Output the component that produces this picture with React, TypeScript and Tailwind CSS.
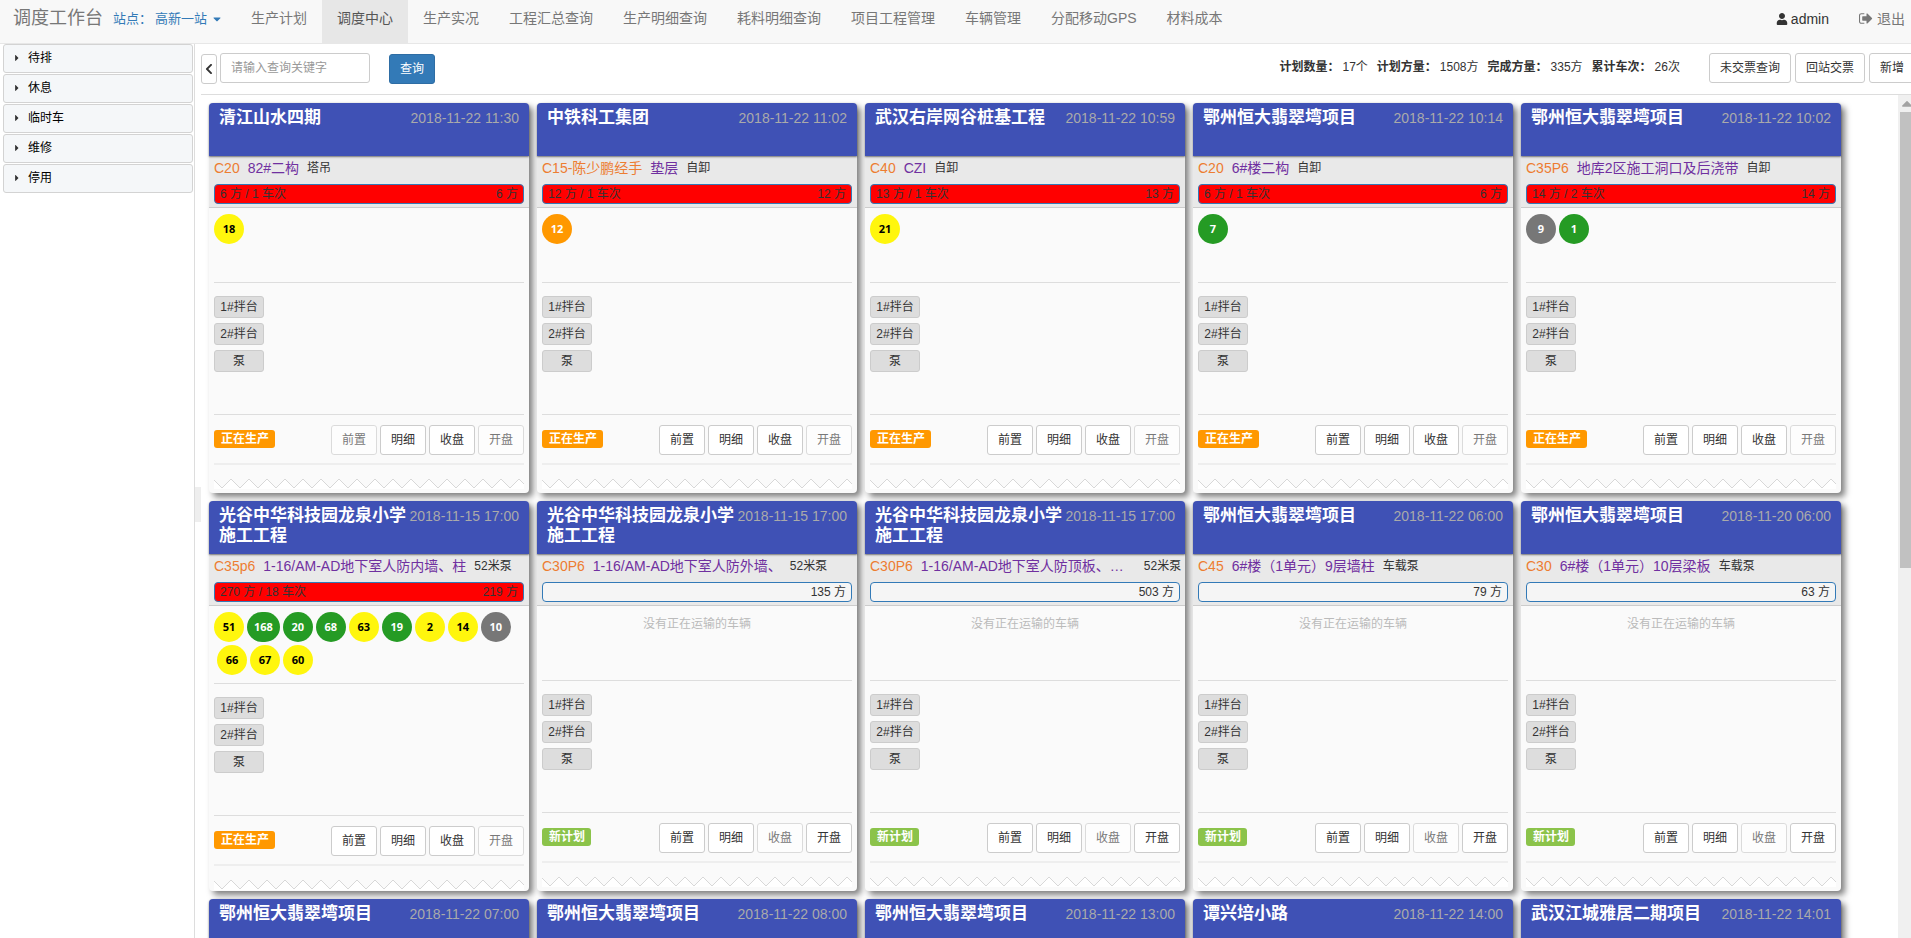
import React from "react";
import { FaUser, FaChevronLeft, FaCaretDown, FaCaretRight, FaCaretUp } from "react-icons/fa";

type Tone = "yellow" | "orange" | "green" | "gray";
type Truck = { no: number; tone: Tone };
type Plan = {
  title: string;
  time: string;
  grade: string;
  part: string;
  method: string;
  done?: string;
  total: string;
  trucks: Truck[];
  producing: boolean;
  disabled: string[];
};

const y = (no: number): Truck => ({ no, tone: "yellow" });
const g = (no: number): Truck => ({ no, tone: "green" });

const site = "鄂州恒大翡翠塆项目";
const school = "光谷中华科技园龙泉小学施工工程";

const plans: Plan[] = [
  { title: "清江山水四期", time: "2018-11-22 11:30", grade: "C20", part: "82#二构", method: "塔吊", done: "6 方 / 1 车次", total: "6 方", trucks: [y(18)], producing: true, disabled: ["前置", "开盘"] },
  { title: "中铁科工集团", time: "2018-11-22 11:02", grade: "C15-陈少鹏经手", part: "垫层", method: "自卸", done: "12 方 / 1 车次", total: "12 方", trucks: [{ no: 12, tone: "orange" }], producing: true, disabled: ["开盘"] },
  { title: "武汉右岸网谷桩基工程", time: "2018-11-22 10:59", grade: "C40", part: "CZI", method: "自卸", done: "13 方 / 1 车次", total: "13 方", trucks: [y(21)], producing: true, disabled: ["开盘"] },
  { title: site, time: "2018-11-22 10:14", grade: "C20", part: "6#楼二构", method: "自卸", done: "6 方 / 1 车次", total: "6 方", trucks: [g(7)], producing: true, disabled: ["开盘"] },
  { title: site, time: "2018-11-22 10:02", grade: "C35P6", part: "地库2区施工洞口及后浇带", method: "自卸", done: "14 方 / 2 车次", total: "14 方", trucks: [{ no: 9, tone: "gray" }, g(1)], producing: true, disabled: ["开盘"] },
  { title: school, time: "2018-11-15 17:00", grade: "C35p6", part: "1-16/AM-AD地下室人防内墙、柱", method: "52米泵", done: "270 方 / 18 车次", total: "219 方", trucks: [y(51), g(168), g(20), g(68), y(63), g(19), y(2), y(14), { no: 10, tone: "gray" }, y(66), y(67), y(60)], producing: true, disabled: ["开盘"] },
  { title: school, time: "2018-11-15 17:00", grade: "C30P6", part: "1-16/AM-AD地下室人防外墙、", method: "52米泵", total: "135 方", trucks: [], producing: false, disabled: ["收盘"] },
  { title: school, time: "2018-11-15 17:00", grade: "C30P6", part: "1-16/AM-AD地下室人防顶板、…", method: "52米泵", total: "503 方", trucks: [], producing: false, disabled: ["收盘"] },
  { title: site, time: "2018-11-22 06:00", grade: "C45", part: "6#楼（1单元）9层墙柱", method: "车载泵", total: "79 方", trucks: [], producing: false, disabled: ["收盘"] },
  { title: site, time: "2018-11-20 06:00", grade: "C30", part: "6#楼（1单元）10层梁板", method: "车载泵", total: "63 方", trucks: [], producing: false, disabled: ["收盘"] },
  { title: site, time: "2018-11-22 07:00", grade: "", part: "", method: "", total: "", trucks: [], producing: false, disabled: ["收盘"] },
  { title: site, time: "2018-11-22 08:00", grade: "", part: "", method: "", total: "", trucks: [], producing: false, disabled: ["收盘"] },
  { title: site, time: "2018-11-22 13:00", grade: "", part: "", method: "", total: "", trucks: [], producing: false, disabled: ["收盘"] },
  { title: "谭兴培小路", time: "2018-11-22 14:00", grade: "", part: "", method: "", total: "", trucks: [], producing: false, disabled: ["收盘"] },
  { title: "武汉江城雅居二期项目", time: "2018-11-22 14:01", grade: "", part: "", method: "", total: "", trucks: [], producing: false, disabled: ["收盘"] },
];

const toneClass: Record<Tone, string> = {
  yellow: "bg-[#fff60d] text-black",
  orange: "bg-[#ff9800] text-white",
  green: "bg-[#259b24] text-white",
  gray: "bg-[#777777] text-white",
};

const navItems = ["生产计划", "调度中心", "生产实况", "工程汇总查询", "生产明细查询", "耗料明细查询", "项目工程管理", "车辆管理", "分配移动GPS", "材料成本"];

const stats = [
  ["计划数量：", "17个"],
  ["计划方量：", "1508方"],
  ["完成方量：", "335方"],
  ["累计车次：", "26次"],
];

function SignOutIcon() {
  return (
    <svg viewBox="0 0 1792 1792" className="size-[15px]" fill="currentColor" aria-hidden="true">
      <path d="M640 1440q0 4 1 20t.5 26.5-3 23.5-10 19.5-20.5 6.5h-320q-119 0-203.5-84.5t-84.5-203.5v-704q0-119 84.5-203.5t203.5-84.5h320q13 0 22.500 9.500t9.500 22.500q0 4 1 20t.5 26.500-3 23.500-10 19.500-20.500 6.500h-320q-66 0-113 47t-47 113v704q0 66 47 113t113 47h312l11.500 1 11.500 3 8 5.500 7 9 2 13.500zM1568 896q0 26-19 45l-544 544q-19 19-45 19t-45-19-19-45v-288h-448q-26 0-45-19t-19-45v-384q0-26 19-45t45-19h448v-288q0-26 19-45t45-19 45 19l544 544q19 19 19 45z" />
    </svg>
  );
}

// Torn-edge strip: 9px teeth repeated every 18px across the card.
const teeth = "-1,0 " + Array.from({ length: 19 }, (_, i) => `${i * 18 + 8},9 ${i * 18 + 17},0`).join(" ");

function Zigzag() {
  return (
    <svg className="mt-[14px] block h-[10px] w-full" aria-hidden="true">
      <polygon points={`${teeth} 341,10 -1,10`} fill="#fff" />
      <polyline points={teeth} fill="none" stroke="#d8d8d8" />
    </svg>
  );
}

function OutlineButton({ children, disabled }: { children: React.ReactNode; disabled?: boolean }) {
  return (
    <button
      type="button"
      disabled={disabled}
      className="h-[30px] shrink-0 rounded-[3px] border border-[#ccc] bg-white px-[10px] text-xs whitespace-nowrap text-[#333] disabled:opacity-65"
    >
      {children}
    </button>
  );
}

function PlanCard({ plan }: { plan: Plan }) {
  return (
    <article className="h-[390px] w-80 rounded-[4px] bg-[#fafafa] shadow-[4px_4px_6px_rgba(0,0,0,0.5)]">
      <header className="relative flex h-[53px] rounded-t-[4px] bg-[#3f51b5] px-[10px] pt-1 shadow-[0_1px_2px_rgba(0,0,0,0.5)]">
        <h2 className="min-w-0 flex-1 pt-px text-[17px] leading-5 font-bold text-white">{plan.title}</h2>
        <time className="shrink-0 text-sm leading-[22px] text-[#aaa]">{plan.time}</time>
      </header>
      <div className="border-b border-[#ccc] bg-[#e9e9e9] px-[5px] pb-[3px]">
        <div className="flex h-6 items-center gap-2 whitespace-nowrap">
          <span className="shrink-0 text-sm text-[#ed7d31]">{plan.grade}</span>
          <span className={`shrink-0 text-sm text-[#7030a0] ${plan.part.endsWith("…") ? "w-[215px]" : ""}`}>{plan.part}</span>
          <span className="shrink-0 text-xs text-[#333]">{plan.method}</span>
        </div>
        <div className={`mt-1 flex h-5 items-center justify-between rounded-[4px] border border-[#337ab7] px-[5px] text-xs text-[#333] ${plan.done ? "bg-[#ff0000]" : "bg-[#f5f5f5]"}`}>
          <span>{plan.done}</span>
          <span>{plan.total}</span>
        </div>
      </div>
      <div className="px-[5px] pt-[6px]">
        <div className="flex min-h-[68px] flex-wrap content-start pb-[5px]">
          {plan.trucks.map((t) => (
            <span
              key={t.no}
              className={`mb-[3px] ml-[3px] flex h-[30px] min-w-[30px] items-center justify-center rounded-full px-[7px] font-['Open_Sans','Noto_Sans',sans-serif] text-[11px] font-bold first:ml-0 ${toneClass[t.tone]}`}
            >
              {t.no}
            </span>
          ))}
          {plan.trucks.length === 0 && <p className="w-full text-center text-xs leading-6 text-[#bbb]">没有正在运输的车辆</p>}
        </div>
        <div className="flex h-[132px] flex-col items-start gap-[5px] border-t border-[#ddd] pt-[13px]">
          {["1#拌台", "2#拌台", "泵"].map((s) => (
            <button key={s} type="button" className="h-[22px] w-[50px] rounded-[3px] border border-[#ccc] bg-[#ddd] text-xs leading-5 text-[#333]">
              {s}
            </button>
          ))}
        </div>
        <div className="flex h-[49px] items-center border-t border-[#ddd] pt-[2px]">
          <span className={`mb-[2px] rounded-[3px] pr-[6px] pl-[7px] text-xs leading-[18px] font-bold text-white ${plan.producing ? "bg-[#ff9800]" : "bg-[#8bc34a]"}`}>
            {plan.producing ? "正在生产" : "新计划"}
          </span>
          <div className="ml-auto flex gap-[3px]">
            {["前置", "明细", "收盘", "开盘"].map((b) => (
              <OutlineButton key={b} disabled={plan.disabled.includes(b)}>
                {b}
              </OutlineButton>
            ))}
          </div>
        </div>
        <div className="h-[2px] bg-[#eee]" />
        <Zigzag />
      </div>
    </article>
  );
}

export default function App() {
  return (
    <div className="flex h-screen flex-col overflow-hidden bg-white font-['Liberation_Sans','Noto_Sans_CJK_SC',sans-serif] text-[#333]">
      <nav className="flex h-11 shrink-0 items-stretch border-b border-[#e7e7e7] bg-[#f8f8f8] text-sm text-[#777]">
        <a href="#home" className="pl-[13px] text-lg leading-9">调度工作台</a>
        <a href="#station" className="flex w-[133px] items-center pb-[5px] pl-[10px] text-[13px] whitespace-nowrap text-[#337ab7]">
          站点：<span className="ml-[3px]">高新一站</span>
          <FaCaretDown className="ml-1 size-3" />
        </a>
        {navItems.map((n) => (
          <a
            key={n}
            href={`#${n}`}
            className={`px-[15px] leading-9 whitespace-nowrap ${n === "调度中心" ? "bg-[#e7e7e7] text-[#555]" : ""}`}
          >
            {n}
          </a>
        ))}
        <a href="#user" className="ml-auto flex items-center gap-[3px] pb-[6px] text-[#333]">
          <FaUser className="size-3" />
          admin
        </a>
        <a href="#logout" className="ml-[30px] flex items-center gap-[3px] pr-[6px] pb-[6px]">
          <SignOutIcon />
          退出
        </a>
      </nav>
      <div className="flex min-h-0 flex-1">
        <aside className="flex w-[195px] shrink-0 flex-col gap-px border-r border-[#ddd] pr-px pl-[3px]">
          {["待排", "休息", "临时车", "维修", "停用"].map((s) => (
            <button key={s} type="button" className="flex h-[29px] items-center rounded-[3px] border border-[#d3d3d3] bg-[#f5f7f9] pb-[2px] pl-2 text-xs text-black">
              <FaCaretRight className="mr-[6px] size-[10px] text-[#333]" />
              {s}
            </button>
          ))}
        </aside>
        <div className="flex w-[6px] shrink-0 items-center pt-[27px]">
          <div className="h-[35px] w-full bg-[#eee]" />
        </div>
        <main className="-mr-1 flex min-w-0 flex-1 flex-col">
          <div className="flex h-[51px] shrink-0 items-start border-b border-[#ddd] pt-[9px] text-xs">
            <button type="button" aria-label="收起" className="mt-px flex h-[30px] w-4 items-center justify-center rounded-[3px] border border-[#ccc]">
              <FaChevronLeft className="size-3 shrink-0" />
            </button>
            <input aria-label="查询关键字" placeholder="请输入查询关键字" className="ml-[3px] h-[30px] w-[150px] rounded-[3px] border border-[#ccc] px-[10px] text-xs placeholder:text-[#999]" />
            <button type="button" className="mt-px ml-[19px] h-[30px] w-[46px] rounded-[3px] border border-[#2e6da4] bg-[#337ab7] text-white">查询</button>
            <dl className="ml-auto flex gap-[9px] leading-7">
              {stats.map(([k, v]) => (
                <div key={k} className="flex gap-[3px]">
                  <dt className="font-bold">{k}</dt>
                  <dd>{v}</dd>
                </div>
              ))}
            </dl>
            <div className="ml-[29px] flex gap-1">
              <OutlineButton>未交票查询</OutlineButton>
              <OutlineButton>回站交票</OutlineButton>
              <OutlineButton>新增</OutlineButton>
            </div>
          </div>
          <div className="flex min-h-0 flex-1">
            <div className="flex min-w-0 flex-1 flex-wrap content-start gap-2 overflow-hidden pt-2 pl-2">
              {plans.map((p, i) => (
                <PlanCard key={i} plan={p} />
              ))}
            </div>
            <div className="flex w-[17px] shrink-0 flex-col items-center bg-[#f0f0f0]" aria-hidden="true">
              <FaCaretUp className="h-[17px] w-3 text-[#a3a3a3]" />
              <div className="h-[456px] w-[13px] bg-[#c1c1c1]" />
            </div>
          </div>
        </main>
      </div>
    </div>
  );
}
